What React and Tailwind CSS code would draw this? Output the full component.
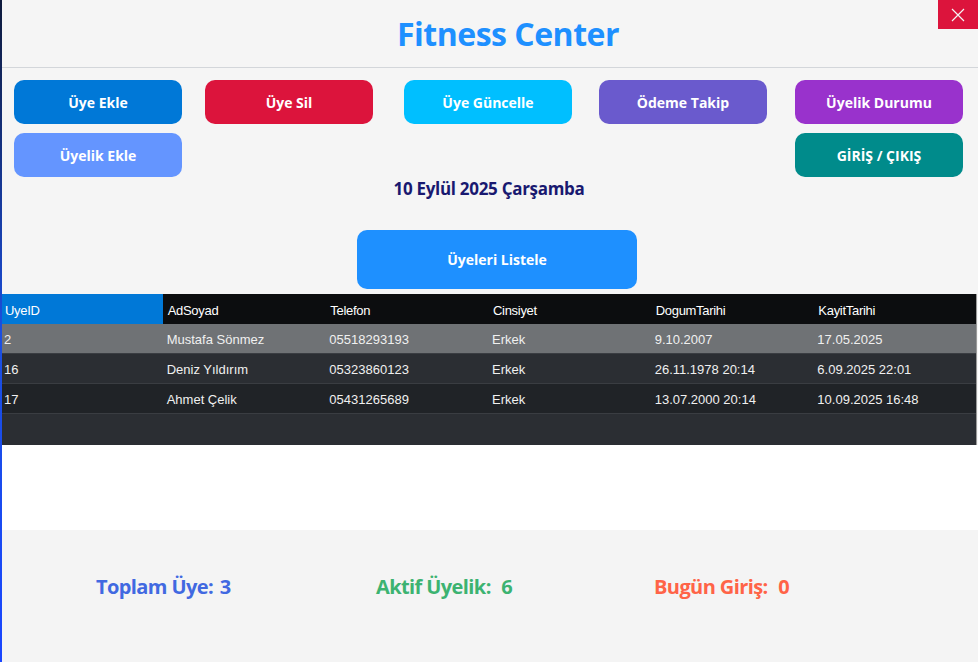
import React from "react";

const topButtons = [
  { label: "Üye Ekle", color: "bg-[#0078d7]", ml: "ml-[14px]" },
  { label: "Üye Sil", color: "bg-[#dc143c]", ml: "ml-[23px]" },
  { label: "Üye Güncelle", color: "bg-[#00bfff]", ml: "ml-[31px]" },
  { label: "Ödeme Takip", color: "bg-[#6a5acd]", ml: "ml-[27px]" },
  { label: "Üyelik Durumu", color: "bg-[#9932cc]", ml: "ml-[28px]" },
];

const columns = ["UyeID", "AdSoyad", "Telefon", "Cinsiyet", "DogumTarihi", "KayitTarihi"];

const rows = [
  ["2", "Mustafa Sönmez", "05518293193", "Erkek", "9.10.2007", "17.05.2025"],
  ["16", "Deniz Yıldırım", "05323860123", "Erkek", "26.11.1978 20:14", "6.09.2025 22:01"],
  ["17", "Ahmet Çelik", "05431265689", "Erkek", "13.07.2000 20:14", "10.09.2025 16:48"],
];

const rowColors = ["bg-[#6f7275]", "bg-[#2b2e33]", "bg-[#202327]"];

const Btn = ({ label, color, className = "" }) => (
  <button
    className={`w-[168px] h-[44px] rounded-[10px] text-white font-bold text-[14px] ${color} ${className}`}
  >
    {label}
  </button>
);

const App = () => {
  return (
    <div
      className="relative w-[978px] h-[662px] overflow-hidden bg-[#f5f5f5] flex flex-col"
      style={{ fontFamily: '"Open Sans", "Noto Sans", sans-serif' }}
    >
      {/* left edge of the window behind */}
      <div className="absolute left-0 top-0 w-[2px] h-full bg-gradient-to-b from-[#0e1a3c] via-[#1b4fe0] to-[#1a46ff]" />

      <div className="h-[68px] flex items-center justify-center pl-[38px] border-b border-[#d3d6da] shrink-0">
        <h1 className="text-[32px] font-bold text-[#1e90ff] tracking-[-0.5px]">Fitness Center</h1>
      </div>
      <button className="absolute top-0 right-0 w-[40px] h-[29px] bg-[#dc143c] flex items-center justify-center">
        <svg width="14" height="14" viewBox="0 0 14 14">
          <path d="M1 1L13 13M13 1L1 13" stroke="#f4f4f4" strokeWidth="1.2" />
        </svg>
      </button>

      <div className="flex mt-[12px]">
        {topButtons.map((b) => (
          <Btn key={b.label} label={b.label} color={b.color} className={b.ml} />
        ))}
      </div>
      <div className="flex mt-[9px]">
        <Btn label="Üyelik Ekle" color="bg-[#6495ff]" className="ml-[14px]" />
        <Btn label="GİRİŞ / ÇIKIŞ" color="bg-[#008b8b]" className="ml-auto mr-[15px]" />
      </div>
      <div className="mt-[1px] text-center text-[17px] font-bold text-[#191970] leading-[22px] tracking-[-0.3px]">
        10 Eylül 2025 Çarşamba
      </div>

      <button className="mt-[30px] ml-[357px] w-[280px] h-[59px] rounded-[10px] bg-[#1e90ff] text-white font-bold text-[14px]">
        Üyeleri Listele
      </button>

      <div
        className="mt-[5px] w-[977px] h-[151px] bg-[#2b2e33] border-r border-[#9a9a9a]"
        style={{ fontFamily: '"Liberation Sans", Arial, sans-serif' }}
      >
        <div className="flex h-[30px] bg-[#0c0d0f] text-white text-[13px]">
          {columns.map((c, i) => (
            <div
              key={c}
              className={`w-[163px] flex items-center pl-[5px] pt-[3px] tracking-[-0.3px] ${i === 0 ? "bg-[#0078d7]" : ""}`}
            >
              {c}
            </div>
          ))}
        </div>
        {rows.map((r, ri) => (
          <div key={ri} className={`flex h-[30px] text-[13px] text-[#f0f0f0] border-b border-[#3a3d42] ${rowColors[ri]}`}>
            {r.map((v, ci) => (
              <div key={ci} className="w-[163px] flex items-center pl-[4px] pt-[2px]">
                {v}
              </div>
            ))}
          </div>
        ))}
      </div>

      <div className="h-[85px] bg-white shrink-0" />

      <div className="flex-1 bg-[#f4f4f4] flex items-start pt-[44px] text-[20px] font-bold tracking-[-0.6px] leading-[26px]">
        <div className="ml-[96px] w-[280px] text-[#4169e1]">
          Toplam Üye: <span className="ml-[2px]">3</span>
        </div>
        <div className="w-[278px] text-[#3cb371]">
          Aktif Üyelik: <span className="ml-[6px]">6</span>
        </div>
        <div className="text-[#ff6347]">
          Bugün Giriş: <span className="ml-[6px]">0</span>
        </div>
      </div>
    </div>
  );
};

export default App;
